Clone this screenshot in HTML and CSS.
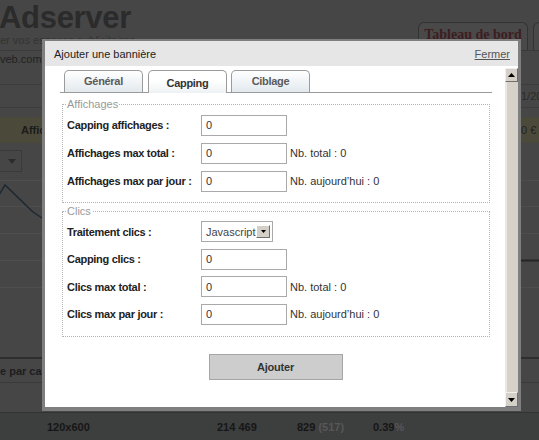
FILE: index.html
```html
<!DOCTYPE html>
<html lang="fr">
<head>
<meta charset="utf-8">
<meta name="color-scheme" content="light">
<title>Adserver – Ajouter une bannière</title>
<link rel="stylesheet" href="styles.css">
</head>
<body>
<div class="page">
  <header class="site-head">
    <div class="brand">
      <div class="brand-name">Adserver</div>
      <div class="brand-tag">er vos espaces publicitaires</div>
    </div>
    <nav class="site-tabs">
      <span class="site-tab">Tableau de bord</span>
      <span class="site-tab site-tab-next"></span>
    </nav>
  </header>
  <div class="row row-url"><span>veb.com</span></div>
  <div class="row row-date"><span></span><span class="date">1/20</span></div>
  <div class="row row-stats"><span class="stat-l">Affic</span><span class="stat-r">0 €</span></div>
  <div class="row row-filter"><span class="filter-box"><svg width="8" height="5" viewBox="0 0 8 5"><path d="M0 0h8L4 5z" fill="#2c2c2c"/></svg></span></div>
  <div class="chart">
    <svg width="539" height="141" viewBox="0 0 539 141">
      <g stroke="#4e4e4e" stroke-width="1">
        <line x1="0" y1="8.5" x2="539" y2="8.5"/>
        <line x1="0" y1="34.5" x2="539" y2="34.5"/>
        <line x1="0" y1="61.5" x2="539" y2="61.5"/>
        <line x1="0" y1="88.5" x2="539" y2="88.5"/>
        <line x1="0" y1="115.5" x2="539" y2="115.5"/>
      </g>
      <line x1="520" y1="88.5" x2="539" y2="88.5" stroke="#262626" stroke-width="2"/>
      <polyline points="-3,26 5,13 33,40 45,48" fill="none" stroke="#1d2832" stroke-width="1.5"/>
    </svg>
  </div>
  <div class="row row-carre"><span>e par car</span></div>
  <div class="foot">
    <span>120x600</span><span>214 469</span><span>829 <span class="muted">(517)</span></span><span>0.39<span class="muted">%</span></span>
  </div>
</div>

<div class="modal">
  <div class="modal-head">
    <span>Ajouter une bannière</span>
    <span class="close">Fermer</span>
  </div>
  <div class="modal-body">
    <div class="content">
      <div class="tabs">
        <span class="tab">Général</span>
        <span class="tab active">Capping</span>
        <span class="tab">Ciblage</span>
      </div>
      <fieldset class="group">
        <legend>Affichages</legend>
        <div class="field"><label>Capping affichages :</label><input class="input" type="text" value="0"></div>
        <div class="field"><label>Affichages max total :</label><input class="input" type="text" value="0"><span class="hint">Nb. total : 0</span></div>
        <div class="field"><label>Affichages max par jour :</label><input class="input" type="text" value="0"><span class="hint">Nb. aujourd’hui : 0</span></div>
      </fieldset>
      <fieldset class="group group-clics">
        <legend>Clics</legend>
        <div class="field"><label>Traitement clics :</label>
          <span class="select"><span class="select-val">Javascript</span><span class="select-btn"><svg width="5" height="3" viewBox="0 0 5 3"><path d="M0 0h5L2.5 3z" fill="#000"/></svg></span></span>
        </div>
        <div class="field"><label>Capping clics :</label><input class="input" type="text" value="0"></div>
        <div class="field"><label>Clics max total :</label><input class="input" type="text" value="0"><span class="hint">Nb. total : 0</span></div>
        <div class="field"><label>Clics max par jour :</label><input class="input" type="text" value="0"><span class="hint">Nb. aujourd’hui : 0</span></div>
      </fieldset>
      <div class="actions"><button class="btn" type="button">Ajouter</button></div>
    </div>
    <div class="scrollbar">
      <span class="sb-btn"><svg width="7" height="4" viewBox="0 0 7 4"><path d="M0 4h7L3.5 0z" fill="#000"/></svg></span>
      <span class="sb-track"></span>
      <span class="sb-btn sb-down"><svg width="7" height="4" viewBox="0 0 7 4"><path d="M0 0h7L3.5 4z" fill="#000"/></svg></span>
    </div>
  </div>
</div>
</body>
</html>
```
FILE: styles.css
```css
:root { color-scheme: light; }
* { box-sizing: border-box; }
html, body { margin: 0; }
body {
  width: 539px;
  height: 440px;
  overflow: hidden;
  position: relative;
  background: #464646;
  font-family: "Liberation Sans", Arial, sans-serif;
  font-size: 11px;
  color: #222;
}

/* ---------- background page (dimmed) ---------- */
.page { display: flex; flex-direction: column; height: 440px; }
.site-head { height: 50px; display: flex; justify-content: space-between; align-items: flex-start; }
.brand { padding-top: 2px; }
.brand-name { font-size: 31px; font-weight: bold; color: #2b2b2b; line-height: 31px; margin-left: -1px; letter-spacing: -0.3px; }
.brand-tag { font-size: 11px; color: #333; line-height: 12px; margin-top: 1px; }
.site-tabs { display: flex; gap: 5px; margin-top: 22px; margin-right: -14px; }
.site-tab {
  height: 28px; width: 110px;
  border: 1px solid #333; border-bottom: none; border-radius: 6px 6px 0 0;
  background: #494949; color: #3e1d21;
  font: bold 14px "Liberation Serif", serif; text-align: center; line-height: 24px;
}
.site-tab-next { width: 20px; }
.row { display: flex; justify-content: space-between; align-items: center; }
.row-url { height: 16px; border-top: 1px solid #3a3a3a; color: #222; }
.row-date { height: 24px; margin-top: 18px; border-top: 1px solid #3d3d3d; border-bottom: 1px solid #3d3d3d; color: #2a2a2a; }
.date { width: 18px; overflow: hidden; white-space: nowrap; }
.row-stats { height: 26px; margin-top: 9px; background: #4b4939; font-weight: bold; color: #1b1b1b; padding-left: 21px; }
.stat-r { width: 18px; overflow: hidden; white-space: nowrap; font-weight: normal; color: #222; }
.row-filter { height: 22px; margin-top: 7px; }
.filter-box { width: 23px; height: 22px; margin-left: -1px; border: 1px solid #3a3a3a; display: flex; align-items: center; justify-content: flex-end; padding-right: 5px; }
.chart { height: 141px; }
.chart svg { display: block; }
.row-carre { height: 26px; margin-top: 44px; border-top: 2px solid #2e2e2e; border-bottom: 1px solid #3a3a3a; font-weight: bold; color: #1d1d1d; }
.foot {
  margin-top: 29px; height: 28px;
  display: grid; grid-template-columns: 170px 80px 76px auto; align-items: center;
  padding-left: 47px; background: #3d3e3e; border-top: 1px solid #333;
  font-weight: bold; font-size: 11px; color: #161616;
}
.muted { color: #575757; }

/* ---------- modal ---------- */
.modal {
  position: absolute; left: 42px; top: 39px;
  width: 479px; height: 372px;
  border: 3px solid #7f7f7f; border-top-width: 2px; border-bottom-width: 4px;
  background: #fff;
  display: flex; flex-direction: column;
}
.modal-head {
  height: 25px; flex: none;
  background: #e6e6e6;
  display: flex; justify-content: space-between; align-items: center;
  padding: 1px 8px 0 9px; color: #222;
}
.close { color: #555; text-decoration: underline; }
.modal-body { flex: 1; display: flex; min-height: 0; }
.content { width: 460px; padding: 4px 13px 0 15px; }

.tabs { display: flex; height: 23px; border-bottom: 1px solid #9a9a9a; padding-left: 4px; }
.tab {
  width: 79px; height: 22px; flex: none;
  border: 1px solid #9b9b9b; border-bottom: none; border-radius: 5px 5px 0 0;
  background: linear-gradient(#ffffff, #e2e9ee);
  font-weight: bold; color: #5b5b5b; text-align: center; line-height: 21px; letter-spacing: -0.3px;
}
.tab + .tab { margin-left: 5px; }
.tab.active + .tab { margin-left: 4px; }
.tab.active {
  height: 23px; margin-bottom: -1px; position: relative;
  background: linear-gradient(#ffffff 45%, #eef1f3);
  color: #333; line-height: 24px;
}

.group { margin: 5px 2px 0; border: 1px dotted #b3b3b3; padding: 0 0 7px 4px; min-width: 0; }
.group legend { padding: 0 1px; margin-left: -1px; color: #999; font-size: 11px; line-height: 13px; }
.group-clics { margin-top: 2px; padding-bottom: 8px; }
.field { display: flex; align-items: center; height: 28px; }
.group-clics .field { height: 27.5px; }
.field label { width: 134px; flex: none; font-weight: bold; letter-spacing: -0.3px; color: #222; }
.input {
  width: 86px; height: 21px; margin: 0;
  border: 1px solid #a9a9a9; padding: 0 4px;
  font: 11px "Liberation Sans", Arial, sans-serif; color: #333; background: #fff;
}
.hint { margin-left: 3px; color: #333; }
.select {
  width: 72px; height: 21px;
  border: 1px solid #a9a9a9; background: #fff;
  display: flex; align-items: center; justify-content: space-between;
  padding: 0 2px 0 4px; color: #444;
}
.select-btn {
  width: 14px; height: 13px;
  background: #d4d0c8; border: 1px solid; border-color: #fff #6f6f6f #6f6f6f #fff;
  display: flex; align-items: center; justify-content: center;
}
.select-btn svg, .sb-btn svg { display: block; }

.actions { display: flex; justify-content: center; margin: 17px 1px 0 0; }
.btn {
  width: 134px; height: 26px;
  background: #cdcdcd; border: 1px solid #a6a6a6;
  font: bold 11px "Liberation Sans", Arial, sans-serif; color: #333; letter-spacing: -0.2px;
}

.scrollbar { width: 13px; flex: none; display: flex; flex-direction: column; padding-top: 2px; background: #fff; }
.sb-btn {
  height: 14px; flex: none;
  background: #d4d0c8; border: 1px solid; border-color: #f2f0ec #6f6f6f #6f6f6f #f2f0ec;
  display: flex; align-items: center; justify-content: center;
}
.sb-down { height: 15px; }
.sb-track { flex: 1; background: #d6d2ca; border-left: 2px solid #ebe8e2; }
```
